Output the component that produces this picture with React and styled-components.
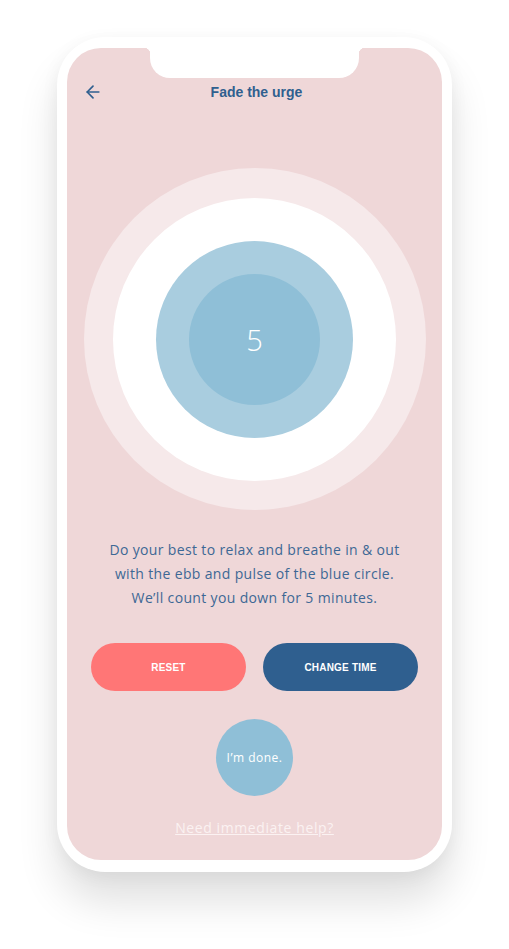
import React from "react";
import styled, { createGlobalStyle } from "styled-components";
import { ArrowLeft } from "lucide-react";

const GlobalStyle = createGlobalStyle`
  html, body {
    margin: 0;
    padding: 0;
    background: #ffffff;
  }
`;

const Page = styled.div`
  display: flex;
  justify-content: center;
  padding-top: 37px;
  min-height: 949px;
  box-sizing: border-box;
`;

// telefoon frame
const Phone = styled.div`
  width: 395px;
  padding: 11px 10px 12px;
  box-sizing: border-box;
  background: #ffffff;
  border-radius: 48px;
  box-shadow: 0 30px 40px rgba(0, 0, 0, 0.12), 0 4px 18px rgba(0, 0, 0, 0.05);
  height: 835px;
`;

const Screen = styled.div`
  position: relative;
  width: 375px;
  height: 812px;
  border-radius: 34px;
  background: #efd7d8;
  overflow: hidden;
  display: flex;
  flex-direction: column;
  align-items: center;
  font-family: "Open Sans", "Liberation Sans", sans-serif;
`;

const Notch = styled.div`
  position: absolute;
  top: 0;
  left: 83px;
  width: 209px;
  height: 30px;
  background: #ffffff;
  border-radius: 0 0 20px 20px;

  &::before,
  &::after {
    content: "";
    position: absolute;
    top: 0;
    width: 6px;
    height: 6px;
    background: radial-gradient(circle at 0 100%, transparent 6px, #ffffff 6.5px);
  }
  &::before {
    left: -6px;
  }
  &::after {
    right: -6px;
    background: radial-gradient(circle at 100% 100%, transparent 6px, #ffffff 6.5px);
  }
`;

const Header = styled.div`
  position: relative;
  width: 100%;
  height: 30px;
  margin-top: 29px;
  padding-left: 4px;
  box-sizing: border-box;
  display: flex;
  align-items: center;
  justify-content: center;

  .back {
    position: absolute;
    left: 16px;
    top: 5px;
    color: #2f5f8f;
  }

  h1 {
    margin: 0;
    font-family: "Liberation Sans", Arial, sans-serif;
    font-size: 14px;
    font-weight: 700;
    color: #2f5f8f;
  }
`;

const Ring = styled.div`
  width: ${(p) => p.size}px;
  height: ${(p) => p.size}px;
  border-radius: 50%;
  background: ${(p) => p.color};
  display: flex;
  align-items: center;
  justify-content: center;
  flex-shrink: 0;
`;

const Breath = styled.div`
  margin-top: 61px;
`;

const Count = styled.span`
  color: #ffffff;
  font-size: 29px;
  font-weight: 300;
  font-family: "Open Sans", sans-serif;
`;

const Text = styled.p`
  margin: 28px 0 0;
  text-align: center;
  color: #3d6895;
  font-size: 14px;
  line-height: 24px;
  letter-spacing: 0.35px;
`;

const Buttons = styled.div`
  display: flex;
  gap: 17px;
  margin-top: 33px;
`;

const Button = styled.button`
  width: 155px;
  height: 48px;
  border: none;
  border-radius: 24px;
  background: ${(p) => (p.primary ? "#2f5f8f" : "#ff7676")};
  color: #ffffff;
  font-family: "Liberation Sans", Arial, sans-serif;
  font-weight: 700;
  font-size: 10px;
  letter-spacing: 0.2px;
  cursor: pointer;
`;

const Done = styled.button`
  margin-top: 28px;
  width: 77px;
  height: 77px;
  border: none;
  border-radius: 50%;
  background: #8fbfd7;
  color: #ffffff;
  font-family: "Open Sans", sans-serif;
  font-size: 12px;
  letter-spacing: 0.5px;
  padding: 0;
`;

const Help = styled.a`
  margin-top: 22px;
  color: #fbf2f2;
  font-size: 14px;
  line-height: 20px;
  text-decoration: underline;
  letter-spacing: 0.6px;
`;

const App = () => {
  return (
    <>
      <GlobalStyle />
      <Page>
        <Phone>
          <Screen>
            <Notch />
            <Header>
              <ArrowLeft className="back" size={20} strokeWidth={2} />
              <h1>Fade the urge</h1>
            </Header>

            <Breath>
              <Ring size={342} color="#f6e9ea">
                <Ring size={283} color="#ffffff">
                  <Ring size={197} color="#a9cddf">
                    <Ring size={131} color="#8fbfd7">
                      <Count>5</Count>
                    </Ring>
                  </Ring>
                </Ring>
              </Ring>
            </Breath>

            <Text>
              Do your best to relax and breathe in &amp; out
              <br />
              with the ebb and pulse of the blue circle.
              <br />
              We’ll count you down for 5 minutes.
            </Text>

            <Buttons>
              <Button>RESET</Button>
              <Button primary>CHANGE TIME</Button>
            </Buttons>

            <Done>I’m done.</Done>

            <Help href="#">Need immediate help?</Help>
          </Screen>
        </Phone>
      </Page>
    </>
  );
};

export default App;
